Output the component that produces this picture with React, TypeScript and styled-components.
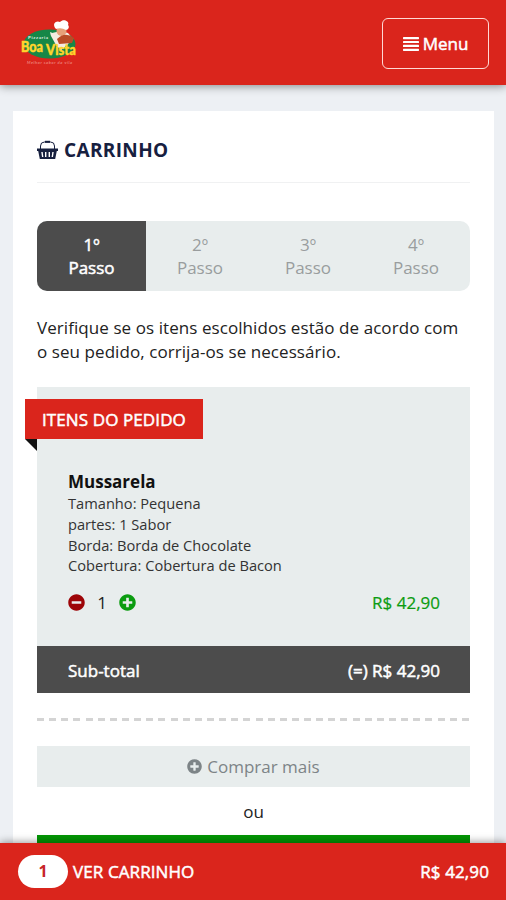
import React from 'react';
import styled, { createGlobalStyle, css } from 'styled-components';
import { FaMinusCircle, FaPlusCircle } from 'react-icons/fa';

const Global = createGlobalStyle`
  * { box-sizing: border-box; }
  body { margin: 0; background: #edf0f4; overflow: hidden; font-family: "Open Sans", "Noto Sans", sans-serif; font-size: 17px; color: #222; }
`;

const emphasis = css`
  font-weight: 400;
  -webkit-text-stroke: 0.5px currentColor;
`;

const Page = styled.div`
  display: flex;
  flex-direction: column;
  height: 900px;
  overflow: hidden;
`;

const Header = styled.header`
  flex: none;
  z-index: 1;
  height: 85px;
  padding: 0 17px 0 20px;
  display: flex;
  align-items: center;
  justify-content: space-between;
  background: #da251c;
  box-shadow: 0 1px 9px rgba(0, 0, 0, 0.45);
`;

const Logo = styled.svg`
  width: 58px;
  height: 50px;
  margin-top: 3px;
  overflow: visible;
`;

const MenuButton = styled.button`
  width: 107px;
  height: 51px;
  margin-top: 2px;
  padding: 0;
  display: flex;
  align-items: center;
  justify-content: center;
  gap: 4px;
  border: 1.5px solid #ffd9d5;
  border-radius: 6px;
  background: transparent;
  color: #fff;
  font: 400 17px "Open Sans", sans-serif;
  ${emphasis}
`;

const Main = styled.main`
  flex: 1;
  min-height: 0;
  overflow: hidden;
  padding: 26px 12px 0 13px;
`;

const Card = styled.section`
  height: 900px;
  padding: 0 24px;
  background: #fff;
`;

const Title = styled.h1`
  height: 72px;
  margin: 0 0 38px;
  padding-top: 6px;
  display: flex;
  align-items: center;
  gap: 6px;
  border-bottom: 1px solid #f0f1f2;
  color: #17203f;
  font-size: 19px;
  font-weight: 700;
  letter-spacing: 0.35px;
`;

const Steps = styled.div`
  height: 70px;
  display: grid;
  grid-template-columns: 109px repeat(3, 108px);
  border-radius: 10px;
  overflow: hidden;
  background: #e8eded;
`;

const Step = styled.div<{ $active?: boolean }>`
  display: flex;
  flex-direction: column;
  align-items: center;
  justify-content: center;
  line-height: 23px;
  background: ${p => (p.$active ? '#4c4c4c' : 'transparent')};
  color: ${p => (p.$active ? '#fff' : '#999d9e')};
  ${p => p.$active && emphasis}
`;

const Intro = styled.p`
  margin: 25px 0 24px;
  line-height: 23.5px;
  letter-spacing: 0.07px;
  white-space: nowrap;
`;

const Order = styled.div`
  height: 259px;
  padding: 12px 30px 0 31px;
  background: #e8eded;
`;

const Ribbon = styled.div`
  position: relative;
  width: 178px;
  height: 40px;
  margin-left: -43px;
  padding-left: 17px;
  background: #da251c;
  color: #fff;
  letter-spacing: 0.1px;
  line-height: 41px;
  white-space: nowrap;
  ${emphasis}
  &::after {
    content: '';
    position: absolute;
    top: 100%;
    left: 0;
    border-top: 12px solid #111;
    border-left: 12px solid transparent;
  }
`;

const ItemName = styled.h2`
  margin: 31px 0 0;
  font-size: 17px;
  line-height: 23px;
  font-weight: 700;
  color: #111;
`;

const Detail = styled.div`
  font-size: 14.65px;
  line-height: 20.8px;
  color: #333;
`;

const ItemFooter = styled.div`
  margin-top: 14px;
  height: 24px;
  display: flex;
  align-items: center;
`;

const Quantity = styled.span`
  width: 34px;
  text-align: center;
`;

const Price = styled.span`
  margin-left: auto;
  color: #0b9c10;
  -webkit-text-stroke: 0.2px currentColor;
`;

const Subtotal = styled.div`
  height: 47px;
  padding: 2px 30px 0 31px;
  display: flex;
  align-items: center;
  justify-content: space-between;
  background: #4c4c4c;
  color: #fff;
  ${emphasis}
`;

const Divider = styled.div`
  height: 3px;
  margin: 25px 0;
  background: repeating-linear-gradient(90deg, #d4d4d4 0 7px, transparent 7px 12.14px);
`;

const BuyMore = styled.button`
  width: 100%;
  height: 41px;
  padding: 0 0 1px;
  display: flex;
  align-items: center;
  justify-content: center;
  gap: 5px;
  border: 0;
  background: #e8eded;
  color: #7d8487;
  font: 400 17px "Open Sans", sans-serif;
`;

const Or = styled.div`
  height: 48px;
  line-height: 49px;
  text-align: center;
`;

const Proceed = styled.div`
  height: 45px;
  background: #039604;
`;

const CartBar = styled.footer`
  flex: none;
  z-index: 1;
  height: 57px;
  padding: 0 17px 0 18px;
  display: flex;
  align-items: center;
  background: #da251c;
  box-shadow: 0 -1px 8px rgba(0, 0, 0, 0.4);
  color: #fff;
  letter-spacing: 0.1px;
  ${emphasis}
`;

const Count = styled.span`
  width: 50px;
  height: 33px;
  margin-right: 5px;
  border-radius: 17px;
  background: #fff;
  color: #c8252a;
  font-size: 16px;
  font-weight: 700;
  -webkit-text-stroke: 0;
  line-height: 33px;
  text-align: center;
`;

const CartTotal = styled.span`
  margin-left: auto;
`;

const MenuIcon = () => (
  <svg width="16" height="14" viewBox="0 0 16 14" fill="#fff">
    <rect width="16" height="2.2" rx=".6" />
    <rect y="3.9" width="16" height="2.2" rx=".6" />
    <rect y="7.8" width="16" height="2.2" rx=".6" />
    <rect y="11.7" width="16" height="2.2" rx=".6" />
  </svg>
);

const BasketIcon = () => (
  <svg width="21" height="20" viewBox="0 0 21 20" fill="none" stroke="#17203f">
    <path d="M3.5 9V6Q3.5 2 7.5 2h6Q17.5 2 17.5 6V9" strokeWidth="1" />
    <path d="M8 1.8h5" strokeWidth="2" />
    <path d="M0 8.5h21v2.5h-1.2L18.2 19H2.8L1.2 11H0z" fill="#17203f" stroke="none" />
    <path d="M5 12l.7 5M8.7 12v5M12.3 12v5M16 12l-.7 5" stroke="#fff" strokeWidth="1.4" />
  </svg>
);

const details = ['Tamanho: Pequena', 'partes: 1 Sabor', 'Borda: Borda de Chocolate', 'Cobertura: Cobertura de Bacon'];

export default function App() {
  return (
    <Page>
      <Global />
      <Header>
        <Logo viewBox="0 0 58 50">
          <ellipse cx="29.5" cy="25" rx="26" ry="14.5" fill="#168747" />
          <path d="M32 14q-3-3-1 3l5 9 5 5 4-3 8-8-5-6-7-2z" fill="#f4ece2" />
          <circle cx="41.5" cy="12" r="5" fill="#e6a078" />
          <path d="M36 10c-5-6 1-9 4-7 4-4 10 0 8 3 2 2 0 5-2 5q-5-3-10-1z" fill="#fff" />
          <path d="M37 20q8-8 17-1l-2 5-13 1z" fill="#b94c26" />
          <g fontFamily="Lato, sans-serif" fontWeight="900" fontSize="15" fill="#ffd52c" stroke="#ffd52c" strokeWidth=".4">
            <text x="1" y="33" textLength="22" lengthAdjust="spacingAndGlyphs">Boa</text>
            <text x="26" y="36" textLength="30" lengthAdjust="spacingAndGlyphs">Vista</text>
          </g>
          <text x="8" y="20" fontFamily="Lato, sans-serif" fontWeight="700" fontSize="4.5" fill="#e6f3e8" textLength="20">Pizzaria</text>
          <text x="7" y="45" fontFamily="Lato, sans-serif" fontStyle="italic" fontSize="4" fill="#f3a29a" textLength="45">Melhor sabor da vila</text>
        </Logo>
        <MenuButton><MenuIcon />Menu</MenuButton>
      </Header>
      <Main>
        <Card>
          <Title><BasketIcon />CARRINHO</Title>
          <Steps>
            {[1, 2, 3, 4].map(n => (
              <Step key={n} $active={n === 1}><span>{n}º</span><span>Passo</span></Step>
            ))}
          </Steps>
          <Intro>Verifique se os itens escolhidos estão de acordo com<br />o seu pedido, corrija-os se necessário.</Intro>
          <Order>
            <Ribbon>ITENS DO PEDIDO</Ribbon>
            <ItemName>Mussarela</ItemName>
            {details.map(d => <Detail key={d}>{d}</Detail>)}
            <ItemFooter>
              <FaMinusCircle size={17} color="#9d0508" />
              <Quantity>1</Quantity>
              <FaPlusCircle size={17} color="#0b9c10" />
              <Price>R$ 42,90</Price>
            </ItemFooter>
          </Order>
          <Subtotal><span>Sub-total</span><span>(=) R$ 42,90</span></Subtotal>
          <Divider />
          <BuyMore><FaPlusCircle size={15} />Comprar mais</BuyMore>
          <Or>ou</Or>
          <Proceed />
        </Card>
      </Main>
      <CartBar><Count>1</Count>VER CARRINHO<CartTotal>R$ 42,90</CartTotal></CartBar>
    </Page>
  );
}
